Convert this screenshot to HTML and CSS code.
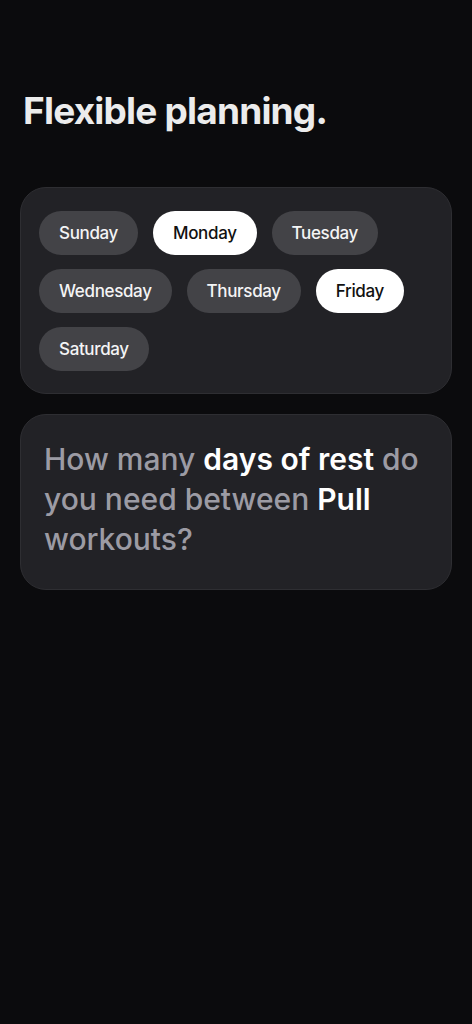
FILE: index.html
```html
<!doctype html>
<html lang="en">
<head>
<meta charset="utf-8" />
<title>Flexible planning</title>
<link rel="stylesheet" href="styles.css">
</head>
<body>

<h1 class="title">Flexible planning.</h1>

<div class="card days">
	<span class="chip">Sunday</span>
	<span class="chip on">Monday</span>
	<span class="chip">Tuesday</span>
	<span class="chip">Wednesday</span>
	<span class="chip">Thursday</span>
	<span class="chip on">Friday</span>
	<span class="chip">Saturday</span>
</div>

<div class="card question">
	<p>How many <b>days of rest</b> do you need between <b>Pull</b> workouts?</p>
</div>

</body>
</html>
```

FILE: styles.css
```css
html{background:#0b0b0d}
body{margin:0;padding:86px 20px 20px;font-family:Inter,"Noto Sans",sans-serif;color:#fff;background:#0b0b0d;min-height:1024px;box-sizing:border-box}

.title{margin:0 0 51px 3px;font-size:37px;line-height:50px;font-weight:700;letter-spacing:-0.8px;color:#ececec}

.card{background:#222226;border:1px solid #2e2e32;border-radius:26px;box-sizing:border-box}

.days{display:flex;flex-wrap:wrap;gap:14px 15px;padding:23px 18px 22px}
.chip{display:block;height:44px;line-height:44px;padding:0 20px;border-radius:22px;background:#434347;color:#f4f4f5;font-size:17px;font-weight:500;letter-spacing:-0.35px}
.chip.on{background:#fff;color:#111}

.question{margin-top:20px;padding:24px 22px 30px 23px}
.question p{margin:0;font-size:30px;line-height:40px;font-weight:500;letter-spacing:0;color:#9c9ba4}
.question b{font-weight:600;color:#fff}
```
